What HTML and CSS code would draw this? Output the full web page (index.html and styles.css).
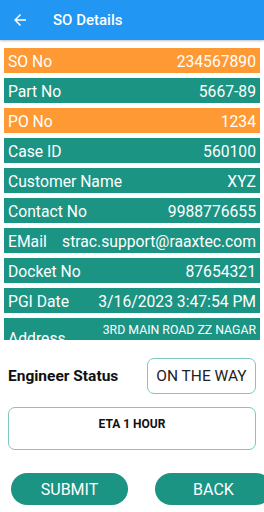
FILE: index.html
```html
<!DOCTYPE html>
<html>
<head>
<meta charset="utf-8">
<link rel="stylesheet" href="styles.css">
</head>
<body>
<div class="app">
  <header class="bar">
    <svg class="back-icon" viewBox="0 0 24 24" width="18" height="18"><path d="M20 11H7.83l5.59-5.59L12 4l-8 8 8 8 1.41-1.41L7.83 13H20v-2z" fill="#fff"/></svg>
    <span class="title">SO Details</span>
  </header>
  <div class="scroll">
    <div class="row orange"><span>SO No</span><span>234567890</span></div>
    <div class="row teal"><span>Part No</span><span>5667-89</span></div>
    <div class="row orange"><span>PO No</span><span>1234</span></div>
    <div class="row teal"><span>Case ID</span><span>560100</span></div>
    <div class="row teal"><span>Customer Name</span><span>XYZ</span></div>
    <div class="row teal"><span>Contact No</span><span>9988776655</span></div>
    <div class="row teal"><span>EMail</span><span>strac.support@raaxtec.com</span></div>
    <div class="row teal"><span>Docket No</span><span>87654321</span></div>
    <div class="row teal"><span>PGI Date</span><span>3/16/2023 3:47:54 PM</span></div>
    <div class="row teal address"><span>Address</span><span class="addr-val">3RD MAIN ROAD ZZ NAGAR</span></div>
  </div>
  <div class="status">
    <span class="status-label">Engineer Status</span>
    <div class="status-box">ON THE WAY</div>
  </div>
  <div class="eta">ETA 1 HOUR</div>
  <div class="actions">
    <button class="btn">SUBMIT</button>
    <button class="btn">BACK</button>
  </div>
</div>
</body>
</html>
```
FILE: styles.css
```css
html, body {
  margin: 0;
  padding: 0;
  background: #fff;
  overflow: hidden;
}
body {
  width: 264px;
  height: 512px;
  font-family: Roboto, "Noto Sans", sans-serif;
}
.app {
  width: 264px;
  height: 512px;
  overflow: hidden;
}
.bar {
  height: 40px;
  background: #2196F3;
  display: flex;
  align-items: center;
  box-shadow: 0 1px 2px rgba(0,0,0,0.25);
  position: relative;
  z-index: 1;
}
.back-icon {
  margin-left: 11px;
}
.title {
  margin-left: 24px;
  color: #fff;
  font-size: 15px;
  font-weight: 500;
}
.scroll {
  height: 300px;
  overflow: hidden;
  padding: 7.5px 4px 0;
  box-sizing: border-box;
  display: flex;
  flex-direction: column;
  gap: 5px;
}
.row {
  flex: none;
  height: 25px;
  box-sizing: border-box;
  display: flex;
  justify-content: space-between;
  align-items: center;
  padding: 2px 4px 0;
  color: #fff;
  font-size: 15.7px;
  white-space: nowrap;
}
.orange { background: #FF9933; }
.teal { background: #1B9484; }
.address {
  height: 40px;
}
.addr-val {
  align-self: flex-start;
  font-size: 12.3px;
  padding-top: 3px;
}
.status {
  display: flex;
  align-items: center;
  justify-content: space-between;
  padding: 18px 8px 0;
}
.status-label {
  font-size: 15.5px;
  font-weight: bold;
  color: #111;
}
.status-box {
  width: 109px;
  height: 36px;
  box-sizing: border-box;
  border: 1px solid #7CC7BE;
  border-radius: 7px;
  display: flex;
  align-items: center;
  justify-content: center;
  font-size: 15.5px;
  color: #222;
}
.eta {
  margin: 13px 8px 0;
  height: 43px;
  box-sizing: border-box;
  border: 1px solid #7CC7BE;
  border-radius: 7px;
  text-align: center;
  font-size: 12px;
  font-weight: bold;
  color: #111;
  padding-top: 9px;
}
.actions {
  display: flex;
  gap: 27px;
  padding-left: 11px;
  margin-top: 23px;
}
.btn {
  flex: none;
  width: 117px;
  height: 32px;
  border: none;
  border-radius: 16px;
  background: #1B9484;
  color: #fff;
  font-family: Roboto, sans-serif;
  font-size: 16px;
  padding: 0;
}
```
